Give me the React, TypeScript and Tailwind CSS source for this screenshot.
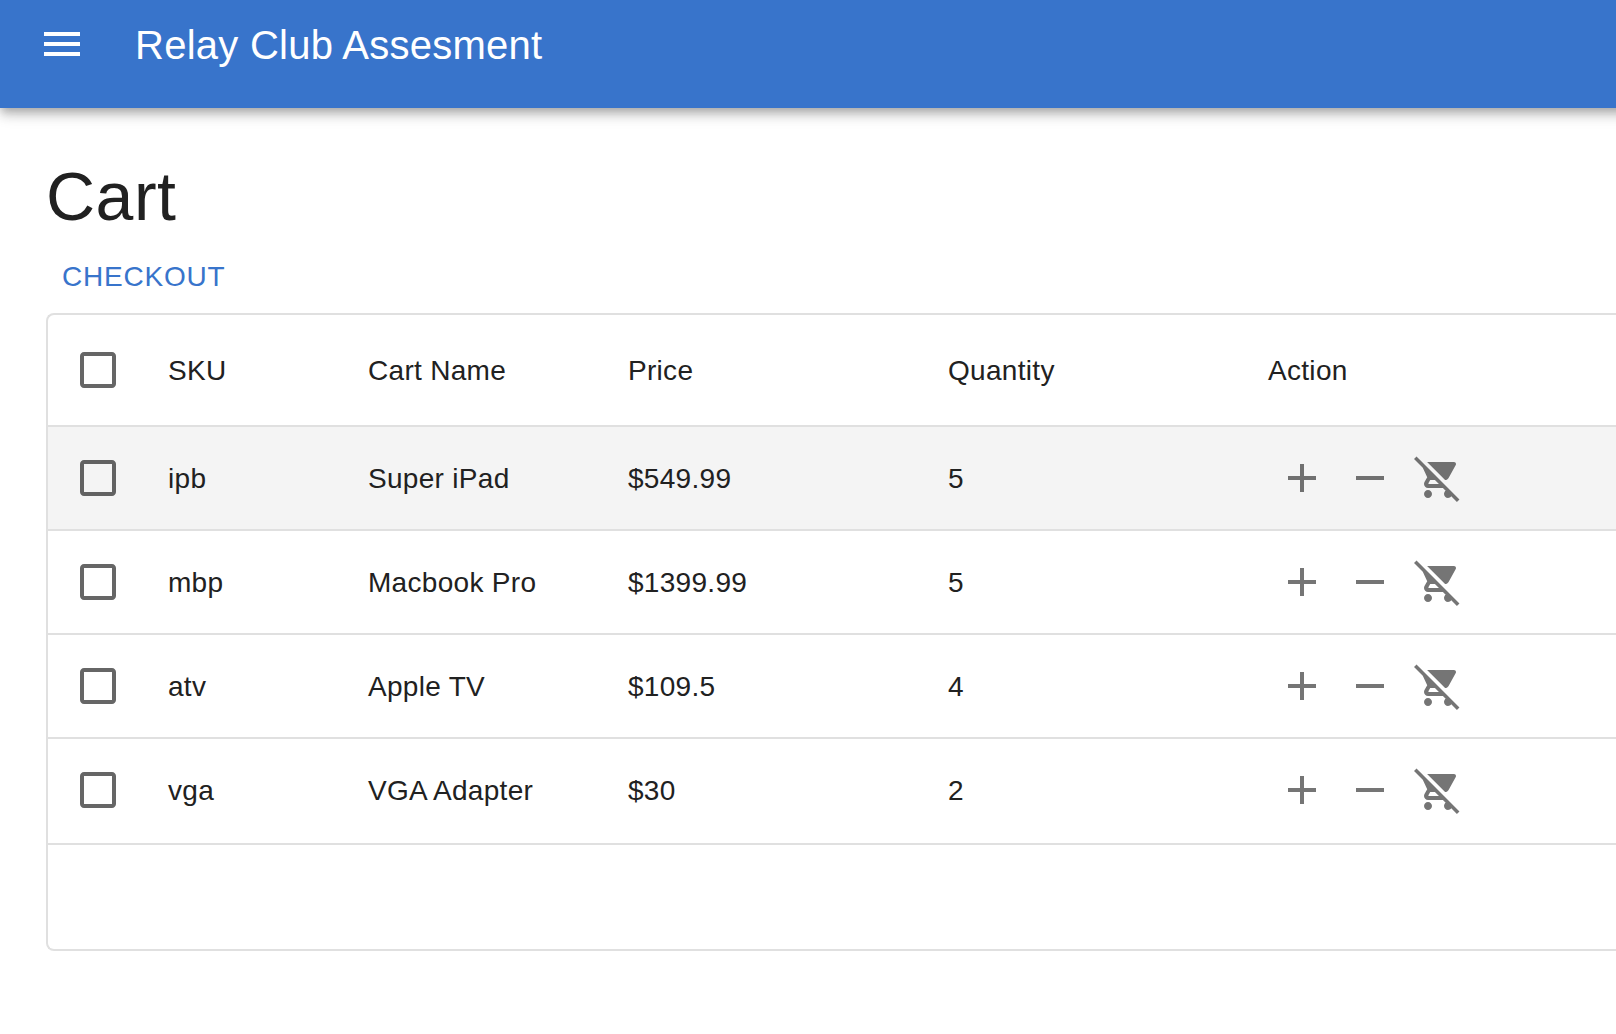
import React from "react";

interface CartItem {
  sku: string;
  name: string;
  price: string;
  quantity: number;
  active?: boolean;
}

const items: CartItem[] = [
  { sku: "ipb", name: "Super iPad", price: "$549.99", quantity: 5, active: true },
  { sku: "mbp", name: "Macbook Pro", price: "$1399.99", quantity: 5 },
  { sku: "atv", name: "Apple TV", price: "$109.5", quantity: 4 },
  { sku: "vga", name: "VGA Adapter", price: "$30", quantity: 2 },
];

const MENU = "M3 18h18v-2H3v2zm0-5h18v-2H3v2zm0-7v2h18V6H3z";
const ADD = "M19 13h-6v6h-2v-6H5v-2h6V5h2v6h6v2z";
const REMOVE = "M19 13H5v-2h14v2z";
const REMOVE_CART =
  "M22.73 22.73L2.77 2.77 2 2l-.73-.73L0 2.54l4.39 4.39 2.21 4.66-1.35 2.45c-.16.28-.25.61-.25.96 0 1.1.9 2 2 2h7.46l1.38 1.38c-.5.36-.83.95-.83 1.62 0 1.1.89 2 1.99 2 .67 0 1.26-.33 1.62-.84L21.46 24l1.27-1.27zM7.42 15c-.14 0-.25-.11-.25-.25l.03-.12.9-1.63h2.36l2 2H7.42zm8.13-2c.75 0 1.41-.41 1.75-1.03l3.58-6.49c.08-.14.12-.31.12-.48 0-.55-.45-1-1-1H6.54l9.01 9zM7 18c-1.1 0-1.99.9-1.99 2S5.9 22 7 22s2-.9 2-2-.9-2-2-2z";
const CHECKBOX_BLANK =
  "M19 5v14H5V5h14m0-2H5c-1.1 0-2 .9-2 2v14c0 1.1.9 2 2 2h14c1.1 0 2-.9 2-2V5c0-1.1-.9-2-2-2z";

function Icon({ path }: { path: string }) {
  return (
    <svg viewBox="0 0 24 24" className="size-12 shrink-0" fill="currentColor" aria-hidden="true">
      <path d={path} />
    </svg>
  );
}

function IconButton({ path, label }: { path: string; label: string }) {
  return (
    <button aria-label={label} className="flex shrink-0 px-2.5 text-black/54">
      <Icon path={path} />
    </button>
  );
}

function CheckCell() {
  return (
    <div className="flex w-[100px] shrink-0 justify-center text-black/60">
      <Icon path={CHECKBOX_BLANK} />
    </div>
  );
}

const columns = [
  { title: "SKU", width: "w-[200px]" },
  { title: "Cart Name", width: "w-[260px]" },
  { title: "Price", width: "w-[320px]" },
  { title: "Quantity", width: "w-[320px]" },
  { title: "Action", width: "w-[368px]" },
];

export default function App() {
  return (
    <div className="h-[1034px] w-full overflow-hidden bg-white font-['Liberation_Sans',Arial,sans-serif] text-[28px] tracking-[0.3px] text-[#212121]">
      <header className="relative -mr-10 flex h-[108px] items-start bg-[#3874cb] pt-5 pl-[38px] text-white shadow-[0_4px_8px_-2px_rgba(0,0,0,0.2),0_8px_10px_0_rgba(0,0,0,0.14),0_2px_20px_0_rgba(0,0,0,0.12)]">
        <button aria-label="menu" className="flex">
          <Icon path={MENU} />
        </button>
        <div className="ml-[49px] pt-px text-[40px] leading-12 tracking-[0.25px]">Relay Club Assesment</div>
      </header>

      <main className="pt-12 pl-[46px]">
        <h1 className="text-[68px] leading-[80px] tracking-[0.5px]">Cart</h1>
        <button className="flex h-[77px] items-center px-4 pt-[5px] tracking-[0.8px] text-[#3874cb]">
          CHECKOUT
        </button>

        <section className="flex h-[638px] flex-col overflow-hidden rounded-l-lg border-2 border-r-0 border-[#e0e0e0]">
          <div className="flex h-28 shrink-0 items-center border-b-2 border-[#e0e0e0]">
            <CheckCell />
            {columns.map((c) => (
              <div key={c.title} className={`${c.width} shrink-0 px-5 pt-0.5`}>
                {c.title}
              </div>
            ))}
          </div>

          {items.map((item, index) => (
            <div
              key={item.sku}
              className={`flex h-[104px] shrink-0 items-center border-b-2 ${
                index === items.length - 1 ? "border-transparent" : "border-[#e0e0e0]"
              } ${item.active ? "bg-[#f4f4f4]" : ""}`}
            >
              <CheckCell />
              <div className="w-[200px] shrink-0 px-5 pt-0.5">{item.sku}</div>
              <div className="w-[260px] shrink-0 px-5 pt-0.5">{item.name}</div>
              <div className="w-[320px] shrink-0 px-5 pt-0.5">{item.price}</div>
              <div className="w-[320px] shrink-0 px-5 pt-0.5">{item.quantity}</div>
              <div className="flex w-[368px] shrink-0 px-5">
                <IconButton path={ADD} label="Add one" />
                <IconButton path={REMOVE} label="Remove one" />
                <IconButton path={REMOVE_CART} label="Remove from cart" />
              </div>
            </div>
          ))}

          <footer className="grow border-t-2 border-[#e0e0e0]" />
        </section>
      </main>
    </div>
  );
}
